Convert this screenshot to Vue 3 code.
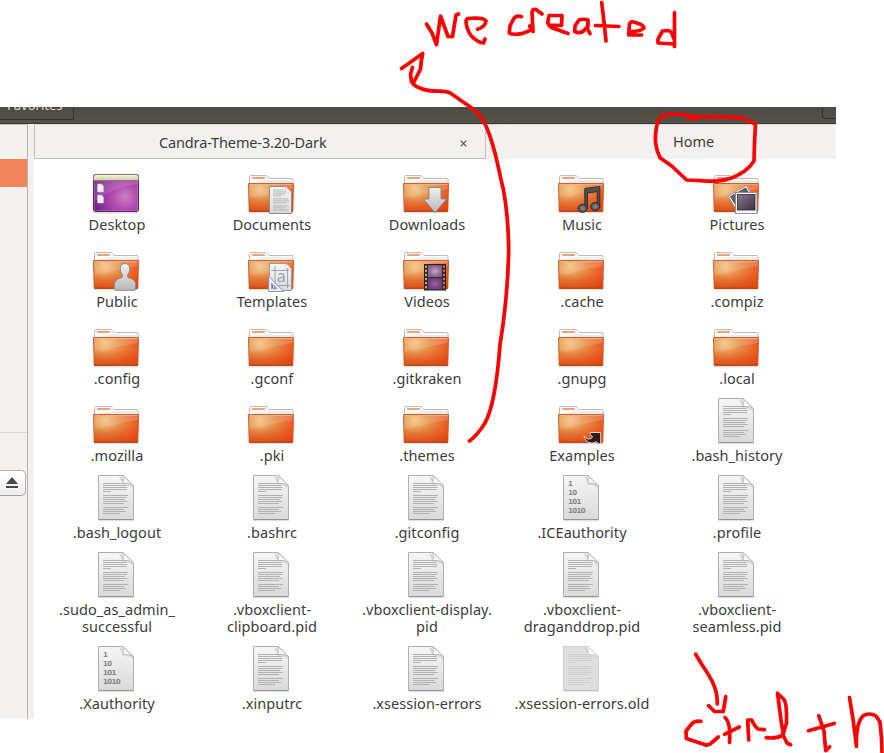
<script setup>
const items = [
  { kind: 'desktop', lines: ['Desktop'] },
  { kind: 'folder', emblem: 'documents', lines: ['Documents'] },
  { kind: 'folder', emblem: 'downloads', lines: ['Downloads'] },
  { kind: 'folder', emblem: 'music', lines: ['Music'] },
  { kind: 'folder', emblem: 'pictures', lines: ['Pictures'] },
  { kind: 'folder', emblem: 'public', lines: ['Public'] },
  { kind: 'folder', emblem: 'templates', lines: ['Templates'] },
  { kind: 'folder', emblem: 'videos', lines: ['Videos'] },
  { kind: 'folder', lines: ['.cache'] },
  { kind: 'folder', lines: ['.compiz'] },
  { kind: 'folder', lines: ['.config'] },
  { kind: 'folder', lines: ['.gconf'] },
  { kind: 'folder', lines: ['.gitkraken'] },
  { kind: 'folder', lines: ['.gnupg'] },
  { kind: 'folder', lines: ['.local'] },
  { kind: 'folder', lines: ['.mozilla'] },
  { kind: 'folder', lines: ['.pki'] },
  { kind: 'folder', lines: ['.themes'] },
  { kind: 'folder', emblem: 'link', lines: ['Examples'] },
  { kind: 'text', lines: ['.bash_history'] },
  { kind: 'text', lines: ['.bash_logout'] },
  { kind: 'text', lines: ['.bashrc'] },
  { kind: 'text', lines: ['.gitconfig'] },
  { kind: 'binary', lines: ['.ICEauthority'] },
  { kind: 'text', lines: ['.profile'] },
  { kind: 'text', lines: ['.sudo_as_admin_', 'successful'] },
  { kind: 'text', lines: ['.vboxclient-', 'clipboard.pid'] },
  { kind: 'text', lines: ['.vboxclient-display.', 'pid'] },
  { kind: 'text', lines: ['.vboxclient-', 'draganddrop.pid'] },
  { kind: 'text', lines: ['.vboxclient-', 'seamless.pid'] },
  { kind: 'binary', lines: ['.Xauthority'] },
  { kind: 'text', lines: ['.xinputrc'] },
  { kind: 'text', lines: ['.xsession-errors'] },
  { kind: 'backup', lines: ['.xsession-errors.old'] },
]

// y position and length of each line of writing on a page icon
const writing = [
  [10, 25], [12, 23.5], [14, 24.5], [16, 24], [18, 8],
  [22, 25], [24, 24], [26, 22], [28, 24.5], [30, 21],
  [34, 25], [36, 21], [38, 23], [40, 17],
]
const smallWriting = [
  [24.5, 11], [26.5, 13], [28.5, 12], [30.5, 8],
  [33.5, 15], [35.5, 16], [37.5, 14], [40.5, 15], [42.5, 13], [44.5, 15],
]
const sprockets = [23.6, 27.7, 31.8, 35.9, 40, 44.1]
const digits = ['1', '10', '101', '1010']
</script>

<template>
  <div class="canvas">
    <div class="window">
      <div class="toolbar">
        <div class="tool-left"><span>Favorites</span></div>
        <div class="tool-right"></div>
      </div>
      <div class="body">
        <aside class="sidebar">
          <div class="selected"></div>
          <div class="rule"></div>
          <div class="eject">
            <svg width="12" height="12" viewBox="0 0 12 12"><path d="M6 0 12 7H0zM0 9h12v2H0z" fill="#4a4a4a" /></svg>
          </div>
        </aside>
        <div class="gutter"></div>
        <main class="main">
          <div class="tabs">
            <div class="tab active"><span class="tab-title">Candra-Theme-3.20-Dark</span><svg class="close" width="7" height="7" viewBox="0 0 7 7"><path d="M.7.7 6.3 6.3M6.3.7.7 6.3" stroke="#4c4c4c" stroke-width="1.100" /></svg></div>
            <div class="tab other"><span>Home</span></div>
          </div>
          <div class="files">
            <div v-for="item in items" :key="item.lines.join('')" class="file">
              <svg class="icon" width="48" height="48" viewBox="0 0 48 48">
                <g v-if="item.kind === 'desktop'">
                  <rect x="2" y="46" width="44" height="2.4" rx="1" fill="#000" opacity=".13" />
                  <rect x="1.5" y="9.5" width="45" height="37" rx="2" fill="url(#purple)" stroke="#642066" />
                  <path d="M2 16h44v3Q20 22 2 37z" fill="#fff" opacity=".12" />
                  <path d="M2.5 16.5v29h43v-29" fill="none" stroke="#cf78cd" opacity=".45" />
                  <path d="M1.5 15.5v-4q0-2 2-2h41q2 0 2 2v4z" fill="url(#cream)" stroke="#86805c" />
                  <path d="M5.5 19h4l2 2v6h-6zM5.5 30h4l2 2v6h-6z" fill="#eee" stroke="#c9b9ce" stroke-width=".6" />
                </g>
                <g v-else-if="item.kind === 'folder'">
                  <rect x="2" y="46" width="44" height="2.3" rx="1" fill="#000" opacity=".13" />
                  <path d="M2.5 20V11.500q0-1 1-1H18q1.200 0 2 .8l2 2.200H45q1 0 1 1V20z" fill="#fbfbfb" stroke="#bcbcbc" />
                  <path d="M20 15.500H45V18H4" fill="#e2e2e2" opacity=".7" />
                  <rect x="5" y="12" width="13" height="2" rx=".8" fill="#f1a274" />
                  <path d="M1.500 18.500h45l-.7 28H2.200z" fill="url(#orange)" stroke="#c8622e" stroke-linejoin="round" />
                  <path d="M2 19h44l-.2 5Q28 27 14 31 7 33 2.300 33.500z" fill="url(#gloss)" />
                  <path d="M2 46V30h44v16z" fill="url(#ember)" />
                  <path d="M2.500 19.500h43" stroke="#f4b58a" opacity=".8" />
                  <path d="M2.500 46.200h43" stroke="#b03c10" stroke-width=".9" />
                  <g v-if="item.emblem === 'documents'">
                    <path d="M22.500 21.500H38.500L44.500 27.500V48.500H22.500z" fill="url(#paper)" stroke="#8e8e8e" />
                    <path d="M38.500 21.500v5.500h6z" fill="#fff" stroke="#bbb" stroke-width=".6" />
                    <rect v-for="l in smallWriting" :key="l[0]" x="26" :y="l[0]" :width="l[1]" height=".9" fill="#b0b0b0" />
                  </g>
                  <path v-else-if="item.emblem === 'downloads'" d="M27 22.500H39V34H44.500L33 47.500 21.500 34H27z" fill="url(#silver)" stroke="#8a8a8a" />
                  <g v-else-if="item.emblem === 'music'">
                    <path d="M27.800 23.400 42.800 21.500V41.500H40.300V26.600L30.500 28V43.500H27.800z" fill="#505050" stroke="#292929" stroke-width=".9" stroke-linejoin="round" />
                    <ellipse cx="25.600" cy="43.300" rx="4.600" ry="4" fill="url(#ball)" stroke="#292929" stroke-width=".9" />
                    <ellipse cx="38.300" cy="41.500" rx="4.600" ry="4" fill="url(#ball)" stroke="#292929" stroke-width=".9" />
                  </g>
                  <g v-else-if="item.emblem === 'pictures'">
                    <path d="M16 31 34.500 20.500 44 37 26 47.500z" fill="#f2f2f2" stroke="#8b8b8b" stroke-width=".8" />
                    <path d="M18.500 31.500 33.700 23 39 32 25 42z" fill="url(#photo)" stroke="#333" stroke-width=".7" />
                    <rect x="23.500" y="27.500" width="21.500" height="21" fill="#f6f6f6" stroke="#8b8b8b" stroke-width=".9" />
                    <rect x="25.500" y="29.500" width="17.500" height="15.500" fill="url(#photo)" stroke="#2e2834" stroke-width=".8" />
                  </g>
                  <path v-else-if="item.emblem === 'public'" d="M33 21.500c3 0 4.700 2.200 4.700 5.200 0 2.500-.8 4.200-1.900 5.700-.5 1-.3 2.600.5 3.300 4 1 7 2.600 7.200 6.300v4.800q0 1.500-1.500 1.500H24q-1.500 0-1.500-1.500V42c.2-3.700 3.200-5.300 7.200-6.300.8-.7 1-2.300.5-3.300-1.100-1.500-1.900-3.200-1.900-5.700 0-3 1.700-5.200 4.700-5.200z" fill="url(#silver)" stroke="#8a8a8a" />
                  <g v-else-if="item.emblem === 'templates'">
                    <path d="M22.500 21.500H39L44.500 27V48.500H22.500z" fill="url(#paper)" stroke="#9a9a9a" />
                    <path d="M39 21.500V27h5.500z" fill="#fff" stroke="#bbb" stroke-width=".6" />
                    <path d="M28 24V46M24 28.500H42M40.500 26V46M26 43.500H43" stroke="#8c95aa" stroke-width=".8" />
                    <text x="34.200" y="40.300" class="glyph">a</text>
                    <path d="M21.700 34 36.500 49.500H21.700zM24.500 41v5.700h5.500z" fill="#eceff4" fill-rule="evenodd" stroke="#858ea5" stroke-width=".9" />
                    <path d="M25.500 43v3M27.500 45v2" stroke="#6e7790" />
                  </g>
                  <g v-else-if="item.emblem === 'videos'">
                    <rect x="22.500" y="22.500" width="21" height="25.500" fill="#2e2e30" stroke="#242424" />
                    <rect x="26" y="23.200" width="14" height="11.800" fill="url(#film)" />
                    <rect x="26" y="36" width="14" height="11.300" fill="url(#filmdark)" />
                    <template v-for="s in sprockets" :key="s">
                      <rect x="23" :y="s" width="2" height="2.200" fill="#d99a6a" />
                      <rect x="41" :y="s" width="2" height="2.200" fill="#d86a35" />
                    </template>
                  </g>
                  <g v-else-if="item.emblem === 'link'">
                    <path d="M27 40q1 6 7 7 3 .5 5-1.500l2.500 2.300h2.200V36.500h-10.500v2l2.500 2.500q-2 2.500-4.500 2-3-.8-4.200-3z" fill="#26201e" stroke="#f6dfd2" stroke-width=".9" />
                  </g>
                </g>
                <g v-else :opacity="item.kind === 'backup' ? 0.62 : 1">
                  <rect x="6" y="46" width="36" height="2.300" rx="1" fill="#000" opacity=".12" />
                  <path d="M6.500 2.500H31L41.500 12.500V46.500H6.500z" :fill="item.kind === 'backup' ? '#cccccc' : 'url(#paper)'" stroke="#b0b0b0" />
                  <path d="M7 46.500H41" stroke="#959595" />
                  <template v-if="item.kind !== 'binary'">
                    <rect v-for="l in writing" :key="l[0]" x="11" :y="l[0]" :width="l[1]" height="1" fill="#b2b2b2" />
                  </template>
                  <template v-else>
                    <text v-for="(d, i) in digits" :key="d" x="11" :y="13.300 + i * 9" class="digits">{{ d }}</text>
                  </template>
                  <path d="M27 3 41 13v3Q37 12 31 12z" fill="url(#shade)" />
                  <path d="M30.500 2.500Q32.300 6 31 10.500 37 9.500 41.500 12.500z" fill="#fbfbfb" stroke="#b4b4b4" stroke-width=".8" />
                </g>
              </svg>
              <div v-for="line in item.lines" :key="line" class="label">{{ line }}</div>
            </div>
          </div>
        </main>
      </div>
    </div>

    <svg class="notes" width="884" height="753" viewBox="0 0 884 753">
      <defs>
        <radialGradient id="orange" gradientUnits="userSpaceOnUse" cx="13" cy="24" r="36"><stop offset="0" stop-color="#f3c483" /><stop offset=".4" stop-color="#e6904a" /><stop offset=".9" stop-color="#ec5a22" /><stop offset="1" stop-color="#e84d18" /></radialGradient>
        <linearGradient id="ember" x2="0" y2="1"><stop offset="0" stop-color="#e2480f" stop-opacity="0" /><stop offset="1" stop-color="#dc430e" stop-opacity=".75" /></linearGradient>
        <linearGradient id="gloss" x2="1"><stop offset="0" stop-color="#fff" stop-opacity=".08" /><stop offset="1" stop-color="#fff" stop-opacity=".18" /></linearGradient>
        <radialGradient id="purple" gradientUnits="userSpaceOnUse" cx="33" cy="32" r="34"><stop offset="0" stop-color="#cf7fc3" /><stop offset=".35" stop-color="#b44db3" /><stop offset=".75" stop-color="#88309a" /><stop offset="1" stop-color="#602473" /></radialGradient>
        <linearGradient id="cream" x2="0" y2="1"><stop offset="0" stop-color="#f5f3e4" /><stop offset="1" stop-color="#cfcbad" /></linearGradient>
        <linearGradient id="paper" x2="0" y2="1"><stop offset="0" stop-color="#f6f6f6" /><stop offset="1" stop-color="#d9d9d9" /></linearGradient>
        <linearGradient id="silver" x2="0" y2="1"><stop offset="0" stop-color="#f0f0f0" /><stop offset="1" stop-color="#b9b9b9" /></linearGradient>
        <radialGradient id="ball"><stop offset="0" stop-color="#909090" /><stop offset="1" stop-color="#454545" /></radialGradient>
        <linearGradient id="photo" x2="1" y2="1"><stop offset="0" stop-color="#8d7788" /><stop offset="1" stop-color="#3b3048" /></linearGradient>
        <radialGradient id="film"><stop offset="0" stop-color="#c9a3c8" /><stop offset="1" stop-color="#84608f" /></radialGradient>
        <radialGradient id="filmdark"><stop offset="0" stop-color="#a05f9e" /><stop offset="1" stop-color="#6d3c78" /></radialGradient>
        <linearGradient id="shade" x1=".6" y1="0" x2=".2" y2="1"><stop offset="0" stop-color="#888" stop-opacity=".5" /><stop offset="1" stop-color="#999" stop-opacity="0" /></linearGradient>
      </defs>
      <g fill="none" stroke="#fe0000" stroke-width="3.7" stroke-linecap="round" stroke-linejoin="round">
        <path d="M426.500 24 432 33 436.500 44.500 440.500 16 448 36.500H452.500L456 15 458.500 14" />
        <path d="M477.500 29.300Q485 27 486 21 484 17 468 18.500 465 20 466.500 25 468 33 473 37.500 478 42.500 483.500 43L485 39" />
        <path d="M521.500 16.700Q516 15 513.500 19L510 26 509.300 33 Q512 35 521.500 33.700L529 31" />
        <path d="M529.500 26 533 31.500 532 12Q533 8.500 536 9.500L542 14" />
        <path d="M549 25 561.500 25.500 562 15.500 549 15.500 547.700 22.500Q549 27 554 28.500L568 33.500" />
        <path d="M588 20Q583 18.500 579 20L575 26 574.700 31.500Q580 34 584 30.500L588 26V20L587.500 29 590 33.700" />
        <path d="M601.700 2.500 604 22 606 41M595.500 25.500 619 26.500" />
        <path d="M629 31.500Q640 32 644 28 643 24.500 638 23.500 631 20 629.500 24L628.700 35H641.500" />
        <path d="M674.500 12.500V46.500M673.500 38Q672 31 668 30.500L662.500 31 658 39V43L673 44" />
        <path d="M401.500 68.500 422.700 53.500Q421 61 420.500 69L414.500 81M412.500 67.500 410.500 74 411.500 81.500Q414 86 421 88.500C432 93.500 445 89 451 93.500L470 106.700C478 113 482 117 486 126 496 148 498 169 503.500 190 508 215 508.500 230 508.700 250 508 290 505 314 500 345 497 385 491 412 485 423 480 431 475 437 469.500 441" />
        <path d="M688.500 118.300 694 116.500 739 117.300Q749 120 755.500 124.500L754.500 143 754 161C748 170 742 173 733 177.500 716 184 704 180 686.700 180L671.700 166 660 157.700C655 147 654.500 139 656.500 127 659 119 660 116 664 115.500 674 112.500 682 114 690 116L696 119.500" />
        <path d="M695.700 654.300 701.500 664C708 674 712 679 714.500 687 717 693 717.300 697 717.300 704M708.500 705.700 714.500 711.500H723.300L725.700 696.700" />
        <path d="M701 721.300Q695 720.500 692 723.500L686 731 686.300 738.500 706.500 745.300 710 744 718.300 737" />
        <path d="M725 717.500Q731 723 729.500 742.500M724.500 734.300 739.300 727" />
        <path d="M748.700 740 747.700 720H751.700Q755 727 758 729L764.300 729.700" />
        <path d="M766.300 737.700Q778 739 783 734.500L786.500 723Q787 702 783.500 699L777.500 693.300 781 720 783.500 736 787 743 790.700 744.700" />
        <path d="M818.700 715.700 824 731 825.700 750.700 829.700 746.700M808.500 730.700 834.300 723.500" />
        <path d="M849.500 697.500 853.300 721 856.500 746.500Q855.500 724 862.700 716 869 712 876 716L880 722 881.500 738 882 752" />
      </g>
    </svg>
  </div>
</template>

<style>
body { background: #fff; overflow: hidden; }
</style>
<style scoped>
.canvas {
  position: relative;
  width: 884px;
  height: 753px;
  padding-top: 107px;
  box-sizing: border-box;
  overflow: hidden;
  background: #fff;
  font-family: "Noto Sans", "Open Sans", sans-serif;
  font-size: 14.5px;
  color: #3c3c3c;
}
.window { width: 836px; height: 612px; display: flex; flex-direction: column; overflow: hidden; }
.toolbar {
  height: 17px;
  box-sizing: border-box;
  display: flex;
  justify-content: space-between;
  background: linear-gradient(#4d4b45, #565249);
  border-bottom: 1px solid #3b3934;
  flex: none;
}
.tool-left {
  width: 74px;
  height: 13px;
  box-sizing: border-box;
  border: solid #33312c;
  border-width: 0 1px 1px 0;
  overflow: hidden;
  display: flex;
  align-items: flex-end;
  padding: 0 0 5px 7px;
  color: #dfdbd2;
  line-height: 18px;
  font-size: 13px;
}
.tool-right {
  width: 14px;
  height: 12px;
  box-sizing: border-box;
  border: solid #33312c;
  border-width: 0 0 1px 1px;
  border-bottom-left-radius: 4px;
}
.body { flex: 1; display: flex; min-height: 0; }
.sidebar {
  width: 28px;
  box-sizing: border-box;
  background: #f2f1f0;
  border-right: 1px solid #b6b3b1;
  border-top: 1px solid #c4c2bf;
  padding-top: 34px;
}
.selected { height: 28px; background: #f28559; }
.rule { margin-top: 245px; height: 1px; background: #dbd9d7; }
.eject {
  margin: 37px 1px 0 -4px;
  height: 26px;
  box-sizing: border-box;
  border: 1px solid #b3b0ae;
  border-bottom-color: #a19e9b;
  border-radius: 5px;
  background: linear-gradient(#fff, #ededed);
  display: flex;
  padding: 6px 0 0 9px;
}
.gutter { width: 6px; background: #f1f0ef; }
.main { flex: 1; display: flex; flex-direction: column; }
.tabs { display: flex; height: 35px; flex: none; border-top: 1px solid #dbd9d6; box-sizing: border-box; }
.tab { display: flex; align-items: center; background: #f2f1f0; box-sizing: border-box; }
.active { width: 452px; border: solid #c1bfbc; border-width: 0 1px 1px 1px; padding-left: 124px; }
.tab-title { width: 301px; white-space: nowrap; letter-spacing: -0.14px; }
.close { margin-top: 3px; }
.other { flex: 1; padding: 0 0 2px 187px; }
.files {
  display: grid;
  grid-template-columns: repeat(5, 155px);
  align-content: start;
  row-gap: 9px;
  padding: 6px 0 0 5px;
}
.file { display: flex; flex-direction: column; align-items: center; }
.icon { margin: 0 1px 3px 0; overflow: visible; }
.label { height: 17px; line-height: 17px; padding-left: 1px; letter-spacing: 0.06px; white-space: nowrap; }
.digits { font: bold 7px "DejaVu Sans", sans-serif; letter-spacing: -0.6px; fill: #858585; }
.glyph { font: 16px "Noto Sans", sans-serif; fill: #9aa2b3; text-anchor: middle; }
.notes { position: absolute; left: 0; top: 0; }
</style>
